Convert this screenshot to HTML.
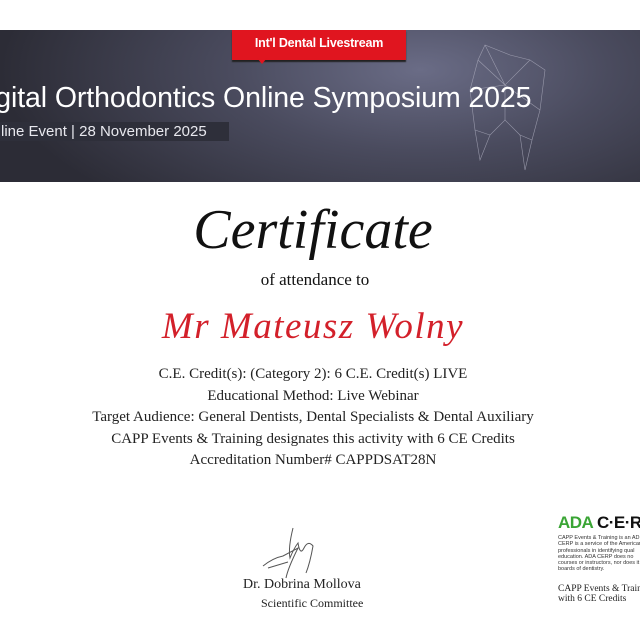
<html><head><style>
body{margin:0;width:640px;height:640px;background:#fff;position:relative;overflow:hidden;font-family:"Liberation Serif",serif}
.a{position:absolute;white-space:nowrap}
.c{left:0;width:626px;text-align:center}
</style></head><body>
<div class="a" style="left:0;top:30px;width:640px;height:152px;background:radial-gradient(ellipse 420px 180px at 420px 40px,#6a6c86 0%,#4a4b5e 45%,#2c2c36 100%)"></div>
<svg class="a" style="left:450px;top:40px" width="110" height="140" viewBox="0 0 110 140"><g stroke="#aab" stroke-width=".6" fill="none" opacity=".8"><path d="M35 5 L60 15 L80 20 L95 30 L90 70 L82 100 L75 130 L70 95 L55 80 L40 95 L30 120 L25 90 L20 50 L28 20 Z"/><path d="M35 5 L55 45 L80 20 M28 20 L55 45 L90 70 M20 50 L55 45 L55 80 M40 95 L25 90 M70 95 L82 100"/></g></svg>
<div class="a" style="left:232px;top:30px;width:174px;height:30px;background:#e0151f;box-shadow:0 2px 1px #222"></div>
<div class="a" style="left:257px;top:58px;width:0;height:0;border-left:5px solid transparent;border-right:5px solid transparent;border-top:6px solid #e0151f"></div>
<div class="a" style="left:232px;top:36px;width:174px;text-align:center;color:#fff;font:bold 12.5px 'Liberation Sans',sans-serif;letter-spacing:-.2px">Int'l Dental Livestream</div>
<div class="a" style="left:-11px;top:82px;color:#fff;font:28.5px 'Liberation Sans',sans-serif;letter-spacing:-.1px">igital Orthodontics Online Symposium 2025</div>
<div class="a" style="left:0;top:122px;width:229px;height:19px;background:#2e2f3a"></div>
<div class="a" style="left:1px;top:123px;color:#e8e8ee;font:15px 'Liberation Sans',sans-serif">line Event | 28 November 2025</div>
<div class="a c" style="top:198px;font-style:italic;font-size:56px;color:#111">Certificate</div>
<div class="a c" style="top:270px;font-size:17px;color:#111;padding-left:2px">of attendance to</div>
<div class="a c" style="top:305px;font-style:italic;font-size:37px;color:#d3202a;letter-spacing:1.5px">Mr Mateusz Wolny</div>
<div class="a c" style="top:364px;font-size:15px;line-height:21.6px;color:#222">C.E. Credit(s): (Category 2): 6 C.E. Credit(s) LIVE<br>Educational Method: Live Webinar<br>Target Audience: General Dentists, Dental Specialists &amp; Dental Auxiliary<br>CAPP Events &amp; Training designates this activity with 6 CE Credits<br>Accreditation Number# CAPPDSAT28N</div>
<svg class="a" style="left:258px;top:518px" width="80" height="70"><g stroke="#555" stroke-width="1" fill="none"><path d="M5 48 Q15 40 25 38 L40 30 Q30 50 28 60 M35 10 Q30 30 32 40 Q36 30 40 25 Q42 38 46 30 Q50 22 55 28 Q52 45 48 55 M10 50 L30 44"/></g></svg>
<div class="a" style="left:243px;top:577px;font-size:14px;color:#222">Dr. Dobrina Mollova</div>
<div class="a" style="left:261px;top:596px;font-size:12px;color:#222">Scientific Committee</div>
<div class="a" style="left:558px;top:513px;font:bold 17px 'Liberation Sans',sans-serif;color:#3aa535;letter-spacing:-.5px">ADA <span style="color:#111">C·E·R</span></div>
<div class="a" style="left:558px;top:535px;font:5.5px/6.3px 'Liberation Sans',sans-serif;color:#333">CAPP Events &amp; Training is an AD<br>CERP is a service of the American<br>professionals in identifying qual<br>education. ADA CERP does no<br>courses or instructors, nor does it<br>boards of dentistry.</div>
<div class="a" style="left:558px;top:584px;font-size:9.5px;line-height:10px;color:#222">CAPP Events &amp; Trainin<br>with 6 CE Credits</div>
</body></html>
